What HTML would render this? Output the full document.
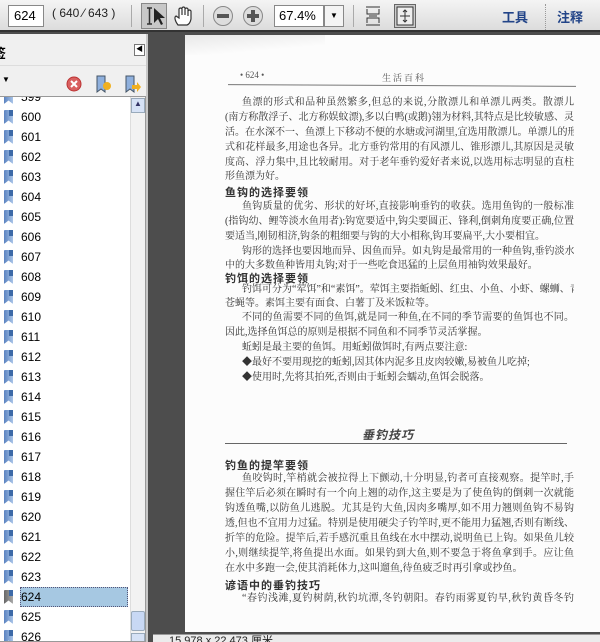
<!DOCTYPE html>
<html><head><meta charset="utf-8"><style>
*{margin:0;padding:0;box-sizing:border-box}
body{width:600px;height:642px;overflow:hidden;position:relative;background:#4d4d4d;font-family:"Liberation Sans","Noto Sans CJK SC",sans-serif}
.a{position:absolute}
#tb{left:0;top:0;width:600px;height:32px;background:linear-gradient(#f4f4f4,#dcdcdc);border-bottom:2px solid #333}
.box{background:#fff;border:1px solid #888;font-size:13px;line-height:20px}
.sep{width:1px;height:22px;background:#aaa;top:5px}
#lp{left:0;top:34px;width:148px;height:608px;background:#f0f0f0;border-right:2px solid #c8c8c8;overflow:hidden}
#list{left:0;top:96px;width:146px;height:546px;background:#fff;border:1px solid #999;border-left:none;overflow:hidden}
.it{position:absolute;left:0;height:20px;width:128px;font-size:12px;line-height:20px;color:#000}
.it span{position:absolute;left:21px}
.bm{position:absolute;left:4px;top:3px;width:9px;height:14px;background:linear-gradient(90deg,#5b83c0,#a8c4e8);border-radius:1px;clip-path:polygon(0 0,100% 0,100% 100%,50% 75%,0 100%)}
.bm:after{content:"";position:absolute;left:5px;top:0;width:4px;height:6px;background:#3d6aa8}
#page{left:185px;top:35px;width:415px;height:597px;background:#fcfcfc}
.ln{position:absolute;left:225px;width:349px;font-size:10px;line-height:14px;color:#333;text-align:justify;text-align-last:justify;white-space:nowrap;overflow:hidden;font-family:"Liberation Serif","Noto Serif CJK SC",serif}
.ln.l{text-align-last:left}
.h{position:absolute;left:225px;font-size:11px;font-weight:bold;color:#333;font-family:"Noto Sans CJK SC",sans-serif;letter-spacing:1px}
</style></head><body>
<div id="tb" class="a">
 <div class="a box" style="left:8px;top:5px;width:36px;height:22px;padding-left:5px">624</div>
 <div class="a" style="left:52px;top:6px;font-size:12px;color:#222">( 640 ⁄ 643 )</div>
 <div class="a sep" style="left:131px"></div>
 <div class="a" style="left:141px;top:3px;width:26px;height:26px;background:#c8c8c8;border:1px solid #888"></div>
 <svg class="a" style="left:143px;top:5px" width="24" height="22"><path d="M4 3h5M6.5 3v16M4 19h5" stroke="#333" stroke-width="1.5" fill="none"/><path d="M11 3l0 15 4-4 3 6 2-1-3-6 5 0z" fill="#222"/></svg>
 <svg class="a" style="left:172px;top:5px" width="22" height="22"><path d="M6 20 C3 16 2 12 4 11 L7 13 L7 4 Q8.5 2 10 4 L10 10 L10 3 Q11.5 1 13 3 L13 10 L13 4 Q14.5 2 16 4 L16 11 L16 6 Q17.5 4 19 6 L19 14 Q18 19 15 20 Z" fill="#fff" stroke="#333" stroke-width="1.2"/></svg>
 <div class="a sep" style="left:203px"></div>
 <svg class="a" style="left:212px;top:5px" width="24" height="22"><circle cx="11" cy="11" r="9.5" fill="#ddd" stroke="#888"/><rect x="5" y="9" width="12" height="4" fill="#555"/></svg>
 <svg class="a" style="left:242px;top:5px" width="24" height="22"><circle cx="11" cy="11" r="9.5" fill="#ddd" stroke="#888"/><rect x="5" y="9" width="12" height="4" fill="#555"/><rect x="9" y="5" width="4" height="12" fill="#555"/></svg>
 <div class="a box" style="left:274px;top:5px;width:50px;height:22px;padding-left:4px">67.4%</div>
 <div class="a" style="left:324px;top:5px;width:20px;height:22px;background:#f4f4f4;border:1px solid #888;font-size:8px;text-align:center;line-height:20px">▼</div>
 <div class="a sep" style="left:353px"></div>
 <svg class="a" style="left:365px;top:5px" width="18" height="22"><path d="M1 2h14M1 20h14M2 4v5h12V4M2 18v-5h12v5M4 11h8" stroke="#333" fill="none"/></svg>
 <div class="a" style="left:394px;top:4px;width:22px;height:24px;background:#ccc;border:1px solid #666"></div>
 <svg class="a" style="left:396px;top:6px" width="18" height="20"><rect x="1" y="1" width="16" height="18" fill="#eee" stroke="#333"/><path d="M9 4v12M4 10h10M7 6l2-2 2 2M7 14l2 2 2-2" stroke="#333" fill="none"/></svg>
 <div class="a" style="left:502px;top:7px;font-size:13px;color:#224488;font-weight:bold">工具</div>
 <div class="a" style="left:545px;top:4px;width:1px;height:26px;border-left:1px dotted #999"></div>
 <div class="a" style="left:557px;top:7px;font-size:13px;color:#224488;font-weight:bold">注释</div>
</div>
<div id="lp" class="a">
 <div class="a" style="left:-7px;top:9px;font-size:13px;font-weight:bold">签</div>
 <div class="a" style="left:134px;top:10px;width:11px;height:12px;border:1px solid #777;background:#fff;font-size:7px;line-height:10px;text-align:center">◀</div>
 <div class="a" style="left:0;top:31px;width:146px;height:1px;background:#ddd"></div>
 <div class="a" style="left:2px;top:41px;font-size:8px">▼</div>
 <svg class="a" style="left:66px;top:42px" width="16" height="16"><circle cx="8" cy="8" r="7" fill="#d96060" stroke="#b33"/><path d="M5 5l6 6M11 5l-6 6" stroke="#fff" stroke-width="2"/></svg>
 <svg class="a" style="left:95px;top:40px" width="18" height="20"><path d="M2 2h8v16l-4-3-4 3z" fill="#8fb0dd" stroke="#456"/><circle cx="12" cy="12" r="4" fill="#f0b020"/></svg>
 <svg class="a" style="left:124px;top:40px" width="18" height="20"><path d="M2 2h8v16l-4-3-4 3z" fill="#8fb0dd" stroke="#456"/><path d="M8 11h5v-3l4 5-4 5v-3H8z" fill="#f0b020"/></svg>
</div>
<div id="list" class="a">
 <div class="it" style="top:-10px"><i class="bm"></i><span>599</span></div>
 <div class="it" style="top:10px"><i class="bm"></i><span>600</span></div>
 <div class="it" style="top:30px"><i class="bm"></i><span>601</span></div>
 <div class="it" style="top:50px"><i class="bm"></i><span>602</span></div>
 <div class="it" style="top:70px"><i class="bm"></i><span>603</span></div>
 <div class="it" style="top:90px"><i class="bm"></i><span>604</span></div>
 <div class="it" style="top:110px"><i class="bm"></i><span>605</span></div>
 <div class="it" style="top:130px"><i class="bm"></i><span>606</span></div>
 <div class="it" style="top:150px"><i class="bm"></i><span>607</span></div>
 <div class="it" style="top:170px"><i class="bm"></i><span>608</span></div>
 <div class="it" style="top:190px"><i class="bm"></i><span>609</span></div>
 <div class="it" style="top:210px"><i class="bm"></i><span>610</span></div>
 <div class="it" style="top:230px"><i class="bm"></i><span>611</span></div>
 <div class="it" style="top:250px"><i class="bm"></i><span>612</span></div>
 <div class="it" style="top:270px"><i class="bm"></i><span>613</span></div>
 <div class="it" style="top:290px"><i class="bm"></i><span>614</span></div>
 <div class="it" style="top:310px"><i class="bm"></i><span>615</span></div>
 <div class="it" style="top:330px"><i class="bm"></i><span>616</span></div>
 <div class="it" style="top:350px"><i class="bm"></i><span>617</span></div>
 <div class="it" style="top:370px"><i class="bm"></i><span>618</span></div>
 <div class="it" style="top:390px"><i class="bm"></i><span>619</span></div>
 <div class="it" style="top:410px"><i class="bm"></i><span>620</span></div>
 <div class="it" style="top:430px"><i class="bm"></i><span>621</span></div>
 <div class="it" style="top:450px"><i class="bm"></i><span>622</span></div>
 <div class="it" style="top:470px"><i class="bm"></i><span>623</span></div>
 <div class="a" style="left:20px;top:490px;width:108px;height:20px;background:#a6c8e2;border:1px dotted #557"></div>
 <div class="it" style="top:490px"><i class="bm" style="background:linear-gradient(90deg,#666,#aaa)"></i><span>624</span></div>
 <div class="it" style="top:510px"><i class="bm"></i><span>625</span></div>
 <div class="it" style="top:530px"><i class="bm"></i><span>626</span></div>
 <div class="a" style="left:130px;top:0;width:15px;height:546px;background:#f2f2f2;border-left:1px solid #ddd"></div>
 <div class="a" style="left:131px;top:1px;width:14px;height:15px;background:#d6e2f6;border:1px solid #9ab;font-size:8px;text-align:center;color:#336">▲</div>
 <div class="a" style="left:131px;top:514px;width:14px;height:20px;background:#c8d8f4;border:1px solid #9ab;border-radius:2px"></div>
 <div class="a" style="left:131px;top:536px;width:14px;height:12px;background:#d6e2f6;border:1px solid #9ab"></div>
</div>
<div id="page" class="a"></div>
<div class="a" style="left:185px;top:35px;width:140px;height:20px;background:linear-gradient(175deg,#e8e8e8,rgba(255,255,255,0) 70%)"></div>
<div class="a" style="left:240px;top:70px;font-size:9px;color:#555;font-family:'Liberation Serif','Noto Serif CJK SC',serif">• 624 •</div>
<div class="a" style="left:382px;top:71px;font-size:9px;color:#555;letter-spacing:2px;font-family:'Noto Serif CJK SC',serif">生活百科</div>
<div class="a" style="left:228px;top:85px;width:348px;height:1px;background:#777;transform:rotate(0.3deg)"></div>
<div class="ln" style="top:96px;left:242px;width:332px">鱼漂的形式和品种虽然繁多,但总的来说,分散漂儿和单漂儿两类。散漂儿</div>
<div class="ln" style="top:111px">(南方称散浮子、北方称娱蚊漂),多以白鸭(或鹅)翎为材料,其特点是比较敏感、灵</div>
<div class="ln" style="top:126px">活。在水深不一、鱼漂上下移动不便的水塘或河湖里,宜选用散漂儿。单漂儿的形</div>
<div class="ln" style="top:141px">式和花样最多,用途也各异。北方垂钓常用的有风漂儿、锥形漂儿,其原因是灵敏</div>
<div class="ln" style="top:156px">度高、浮力集中,且比较耐用。对于老年垂钓爱好者来说,以选用标志明显的直柱</div>
<div class="ln l" style="top:170px">形鱼漂为好。</div>
<div class="h" style="top:184px">鱼钩的选择要领</div>
<div class="ln" style="top:200px;left:242px;width:332px">鱼钩质量的优劣、形状的好坏,直接影响垂钓的收获。选用鱼钩的一般标准</div>
<div class="ln" style="top:215px">(指钩幼、鲤等淡水鱼用者):钩宽要适中,钩尖要圆正、锋利,倒刺角度要正确,位置</div>
<div class="ln l" style="top:230px">要适当,刚韧相济,钩条的粗细要与钩的大小相称,钩耳要扁平,大小要相宜。</div>
<div class="ln" style="top:245px;left:242px;width:332px">钩形的选择也要因地而异、因鱼而异。如丸钩是最常用的一种鱼钩,垂钓淡水</div>
<div class="ln l" style="top:259px">中的大多数鱼种皆用丸钩;对于一些吃食迅猛的上层鱼用袖钩效果最好。</div>
<div class="h" style="top:270px">钓饵的选择要领</div>
<div class="ln" style="top:283px;left:242px;width:332px">钓饵可分为“荤饵”和“素饵”。荤饵主要指蚯蚓、红虫、小鱼、小虾、螺蛳、青蛙、</div>
<div class="ln l" style="top:297px">苍蝇等。素饵主要有面食、白薯丁及米饭粒等。</div>
<div class="ln" style="top:311px;left:242px;width:332px">不同的鱼需要不同的鱼饵,就是同一种鱼,在不同的季节需要的鱼饵也不同。</div>
<div class="ln l" style="top:326px">因此,选择鱼饵总的原则是根据不同鱼和不同季节灵活掌握。</div>
<div class="ln l" style="top:341px;left:242px">蚯蚓是最主要的鱼饵。用蚯蚓做饵时,有两点要注意:</div>
<div class="ln l" style="top:356px;left:242px">◆最好不要用现挖的蚯蚓,因其体内泥多且皮肉较嫩,易被鱼儿吃掉;</div>
<div class="ln l" style="top:371px;left:242px">◆使用时,先将其拍死,否则由于蚯蚓会蠕动,鱼饵会脱落。</div>
<div class="a" style="left:362px;top:426px;font-size:12px;font-style:italic;font-weight:bold;color:#444;letter-spacing:1px;font-family:'Noto Sans CJK SC',sans-serif">垂钓技巧</div>
<div class="a" style="left:225px;top:443px;width:342px;height:1px;background:#666"></div>
<div class="h" style="top:457px">钓鱼的提竿要领</div>
<div class="ln" style="top:472px;left:242px;width:332px">鱼咬钩时,竿梢就会被拉得上下颤动,十分明显,钓者可直接观察。提竿时,手</div>
<div class="ln" style="top:487px">握住竿后必须在瞬时有一个向上翘的动作,这主要是为了使鱼钩的倒刺一次就能</div>
<div class="ln" style="top:502px">钩透鱼嘴,以防鱼儿逃脱。尤其是钓大鱼,因肉多嘴厚,如不用力翘则鱼钩不易钩</div>
<div class="ln" style="top:517px">透,但也不宜用力过猛。特别是使用硬尖子钓竿时,更不能用力猛翘,否则有断线、</div>
<div class="ln" style="top:532px">折竿的危险。提竿后,若手感沉重且鱼线在水中摆动,说明鱼已上钩。如果鱼儿较</div>
<div class="ln" style="top:547px">小,则继续提竿,将鱼提出水面。如果钓到大鱼,则不要急于将鱼拿到手。应让鱼</div>
<div class="ln l" style="top:562px">在水中多跑一会,使其消耗体力,这叫遛鱼,待鱼疲乏时再引拿或抄鱼。</div>
<div class="h" style="top:577px">谚语中的垂钓技巧</div>
<div class="ln" style="top:592px;left:242px;width:332px">“春钓浅滩,夏钓树荫,秋钓坑潭,冬钓朝阳。春钓雨雾夏钓早,秋钓黄昏冬钓</div>
<div class="a" style="left:153px;top:634px;width:447px;height:8px;background:#ececec;border-top:1px solid #999;overflow:hidden"><div class="a" style="left:16px;top:-3px;font-size:11px;color:#222">15.978 x 22.473 厘米</div></div>
</body></html>
